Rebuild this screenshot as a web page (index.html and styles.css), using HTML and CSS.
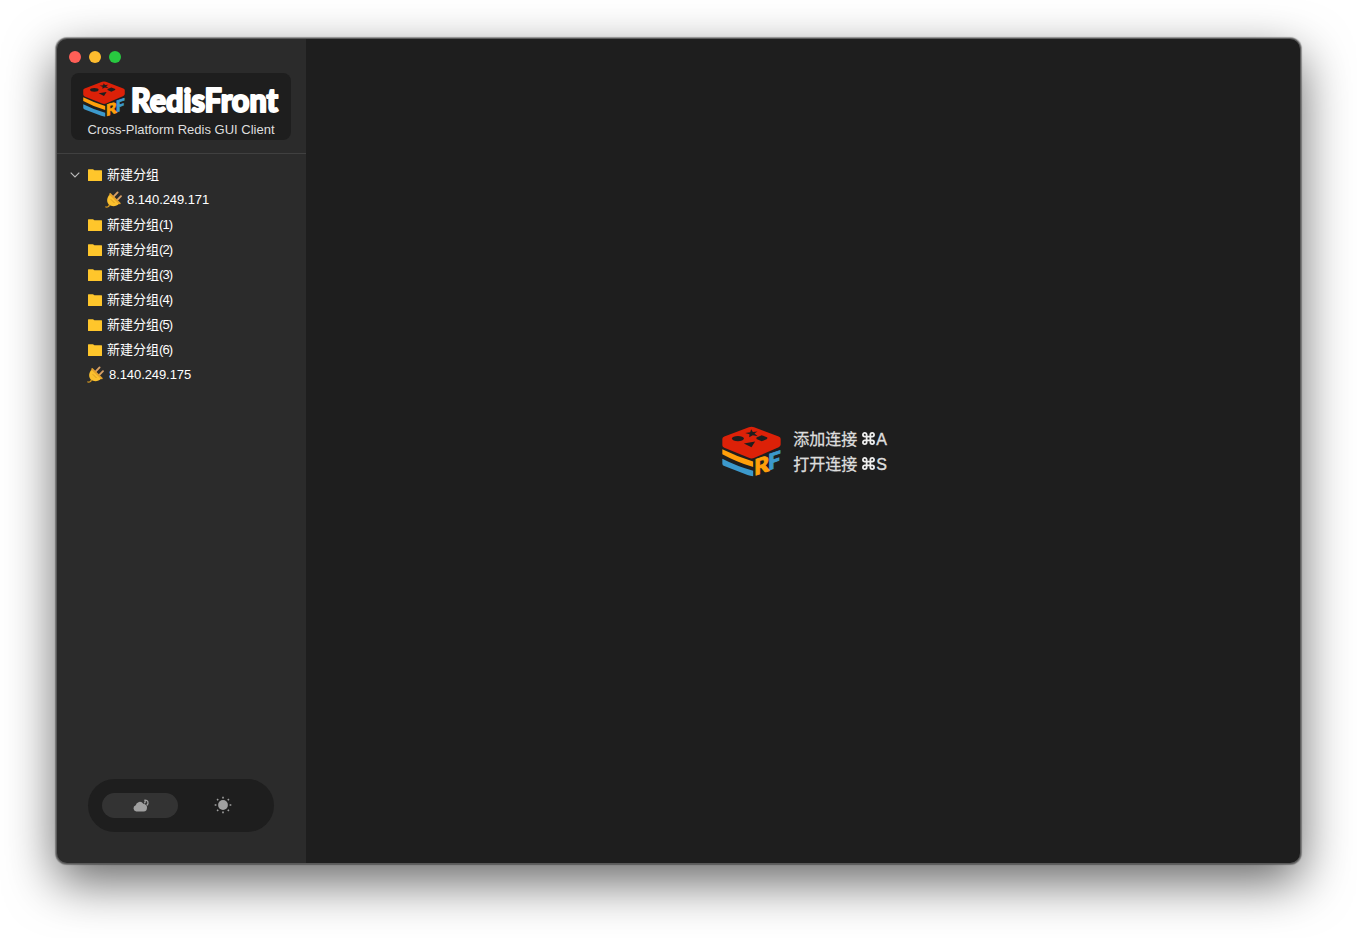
FILE: index.html
```html
<!DOCTYPE html>
<html lang="zh-CN">
<head>
<meta charset="utf-8">
<title>RedisFront</title>
<link rel="stylesheet" href="styles.css">
</head>
<body>
<svg class="defs" width="0" height="0" aria-hidden="true">
  <symbol id="logo" viewBox="23 19 178 152" overflow="visible">
    <path fill="#dc2108" d="M24 57Q24 53 30 50L104 22Q112 19 120 22L194 50Q200 53 200 57V74Q200 79 194 82L121 114Q112 118 104 114L30 84Q24 81 24 76Z"/>
    <g fill="#1e1e1e">
      <ellipse cx="71" cy="56" rx="18" ry="8"/>
      <path d="M111 28l5 8 14-1-9 6 10 8-15-3-11 6 1-9-13-4 15-2zM127 53l16-7 17 7-1 4-16 7-16-7zM89 71l34-6-11 17z"/>
    </g>
    <path fill="#ff9f0a" d="M24 88Q68 110 117 125V142Q66 126 24 103Z"/>
    <path fill="#3c99cc" d="M24 117Q68 140 117 153V170Q108 169 100 166L30 139Q24 137 24 132Z"/>
    <g class="logo-letters">
      <text fill="#ff9f0a" stroke="#ff9f0a" transform="matrix(1 -.34 0 1 120 168)" textLength="45" lengthAdjust="spacingAndGlyphs">R</text>
      <text fill="#3c99cc" stroke="#3c99cc" transform="matrix(1 -.34 0 1 162 152)" textLength="38" lengthAdjust="spacingAndGlyphs">F</text>
    </g>
  </symbol>
  <symbol id="folder" viewBox="0 0 14 12">
    <path fill="#ffc62b" d="M0 .8Q0 .3.5.3H5L6.4 1.3H13.5Q14 1.3 14 1.8V11.5Q14 12 13.5 12H.5Q0 12 0 11.5Z"/>
  </symbol>
  <symbol id="plug" viewBox="0 0 18 17">
    <path d="M.3 15.8C2.5 16.5 4 15.8 4.5 13.5" fill="none" stroke="#d99b20" stroke-width="1.2"/>
    <path d="M8.8 5.4L12.6 1.4M12.4 8.8L16 5.2" fill="none" stroke="#d8a066" stroke-width="1.9" stroke-linecap="round"/>
    <path fill="#fbc02d" d="M5.1 3.5L14.3 12.6C11.4 15.8 6.8 16.2 3.9 13.6C1.2 11 1.6 6.2 5.1 3.5Z"/>
    <path d="M5.1 3L14.8 12.3" stroke="#e5a32d" stroke-width="1.8" stroke-linecap="round"/>
    <path d="M5.7 8.2L9.5 12" stroke="#cf941f" stroke-width=".8"/>
  </symbol>
</svg>
<div class="window">
  <aside class="sidebar">
    <div class="header">
      <div class="lights"><i class="light red"></i><i class="light yellow"></i><i class="light green"></i></div>
      <div class="brand">
        <div class="brand-row">
          <svg class="brand-logo"><use href="#logo"/></svg>
          <svg class="wordmark" viewBox="0 0 150 34"><text x="2" y="26.5" textLength="147" lengthAdjust="spacingAndGlyphs">RedisFront</text></svg>
        </div>
        <div class="tagline">Cross-Platform Redis GUI Client</div>
      </div>
    </div>
    <ul class="tree">
      <li class="node"><svg class="chevron" viewBox="0 0 10 6"><path d="M.7.7L5 5L9.3.7"/></svg><svg class="folder"><use href="#folder"/></svg><span class="group">新建分组</span></li>
      <li class="node child"><svg class="plug"><use href="#plug"/></svg><span class="ip">8.140.249.171</span></li>
      <li class="node"><svg class="folder"><use href="#folder"/></svg><span class="group">新建分组<span class="count">(1)</span></span></li>
      <li class="node"><svg class="folder"><use href="#folder"/></svg><span class="group">新建分组<span class="count">(2)</span></span></li>
      <li class="node"><svg class="folder"><use href="#folder"/></svg><span class="group">新建分组<span class="count">(3)</span></span></li>
      <li class="node"><svg class="folder"><use href="#folder"/></svg><span class="group">新建分组<span class="count">(4)</span></span></li>
      <li class="node"><svg class="folder"><use href="#folder"/></svg><span class="group">新建分组<span class="count">(5)</span></span></li>
      <li class="node"><svg class="folder"><use href="#folder"/></svg><span class="group">新建分组<span class="count">(6)</span></span></li>
      <li class="node"><svg class="plug"><use href="#plug"/></svg><span class="ip">8.140.249.175</span></li>
    </ul>
    <div class="theme">
      <div class="option active">
        <svg width="16" height="13" viewBox="0 0 16 13"><path fill="#a0a0a0" d="M3.2 12.5A3.2 3.2 0 0 1 2.7 6.3A4.2 4.2 0 0 1 10.3 4.7Q14.2 5.5 14 8.6Q14 12.5 10.7 12.5Z"/><path d="M11.4 1.1C15.2.7 16.1 4.2 13.7 6.4M11.6 1.1Q13 3 11.2 4.2" fill="none" stroke="#a0a0a0" stroke-width="1.3"/></svg>
      </div>
      <div class="option">
        <svg width="18" height="18" viewBox="0 0 18 18"><circle cx="9" cy="9" r="4.9" fill="#a0a0a0"/><path d="M9 .7V2.4M9 15.6V17.3M.7 9H2.4M15.6 9H17.3M3.1 3.1L4.2 4.2M13.8 13.8L14.9 14.9M14.9 3.1L13.8 4.2M4.2 13.8L3.1 14.9" stroke="#a0a0a0" stroke-width="1.6"/></svg>
      </div>
    </div>
  </aside>
  <main class="content">
    <svg class="main-logo"><use href="#logo"/></svg>
    <div class="hints">
      <div class="hint"><span>添加连接</span><svg class="cmd" viewBox="0 0 14 14"><path d="M5 5V3A2 2 0 1 0 3 5H11A2 2 0 1 0 9 3V11A2 2 0 1 0 11 9H3A2 2 0 1 0 5 11Z"/></svg><span class="key">A</span></div>
      <div class="hint"><span>打开连接</span><svg class="cmd" viewBox="0 0 14 14"><path d="M5 5V3A2 2 0 1 0 3 5H11A2 2 0 1 0 9 3V11A2 2 0 1 0 11 9H3A2 2 0 1 0 5 11Z"/></svg><span class="key">S</span></div>
    </div>
  </main>
</div>
</body>
</html>
```
FILE: styles.css
```css
* { box-sizing: border-box; }
body {
  margin: 0;
  height: 938px;
  padding: 38px 55px 73px 56px;
  overflow: hidden;
  background: #fff;
  font-family: "Liberation Sans", "Noto Sans CJK SC", sans-serif;
  color: #fff;
}
svg { display: block; flex: none; overflow: visible; }
.defs { position: absolute; }
.window {
  display: flex;
  width: 1245px;
  height: 826px;
  padding: 1px;
  background: #5a5a5a;
  border-radius: 11px;
  box-shadow: 0 18px 50px rgba(0, 0, 0, .6), 0 0 1px 1px rgba(0, 0, 0, .35);
}
.sidebar {
  display: flex;
  flex-direction: column;
  width: 249px;
  background: #2b2b2b;
  border-radius: 10px 0 0 10px;
}
.header {
  height: 115px;
  padding: 12px 14px 0;
  border-bottom: 1px solid #404040;
}
.lights { display: flex; gap: 8px; margin-left: -2px; }
.light { width: 12px; height: 12px; border-radius: 50%; }
.red { background: #ff5f57; }
.yellow { background: #febc2e; }
.green { background: #28c840; }
.brand {
  width: 220px;
  height: 67px;
  margin-top: 10px;
  padding: 7px 10px 0 12px;
  background: #1e1e1e;
  border-radius: 8px;
}
.brand-row { display: flex; gap: 4px; height: 42px; }
.brand-logo { width: 42px; height: 36px; margin-top: 1px; }
.wordmark { width: 150px; height: 34px; margin-top: 5px; }
.wordmark text {
  font-family: Lato, sans-serif;
  font-size: 32px;
  font-weight: 900;
  fill: #fff;
  stroke: #fff;
  stroke-width: 2px;
  stroke-linejoin: round;
}
.logo-letters { font: 900 66px Lato, sans-serif; stroke-width: 3px; }
.tagline {
  font-size: 13px;
  line-height: 16px;
  text-align: center;
  white-space: nowrap;
  color: #dedede;
  padding-right: 2px;
}
.tree { margin: 0; padding: 8px 0 0 31px; list-style: none; font-size: 13px; }
.node { display: flex; align-items: center; height: 25px; }
.child { padding-left: 18px; }
.chevron { width: 10px; height: 6px; margin: 0 8px 0 -18px; }
.chevron path { fill: none; stroke: #bdbdbd; stroke-width: 1.1; }
.folder { width: 14px; height: 12px; margin-right: 5px; }
.plug { width: 18px; height: 17px; margin: 0 4px 0 -1px; }
.group { padding-bottom: 2px; }
.count { letter-spacing: -.9px; }
.ip { letter-spacing: -.08px; }
.theme {
  display: flex;
  gap: 6px;
  width: 186px;
  height: 53px;
  margin: auto 0 31px 31px;
  padding: 14px;
  background: #1e1e1e;
  border-radius: 27px;
}
.option { display: flex; align-items: center; justify-content: center; width: 76px; height: 25px; padding: 0 0 1px 1px; border-radius: 13px; }
.active { background: #333; }
.content {
  display: flex;
  flex: 1;
  align-items: center;
  justify-content: center;
  gap: 12px;
  padding-left: 3px;
  background: #1e1e1e;
  border-radius: 0 10px 10px 0;
}
.main-logo { width: 59px; height: 51px; }
.hint { display: flex; align-items: center; height: 25px; font-size: 16px; color: #ddd; -webkit-text-stroke: .3px #ddd; }
.hint span { padding-bottom: 1px; }
.cmd { width: 13px; height: 13px; margin-left: 5px; fill: none; stroke: #eee; stroke-width: 1.9; }
.hint .key { padding: 2px 0 0 1px; -webkit-text-stroke: .4px #ddd; }
```
